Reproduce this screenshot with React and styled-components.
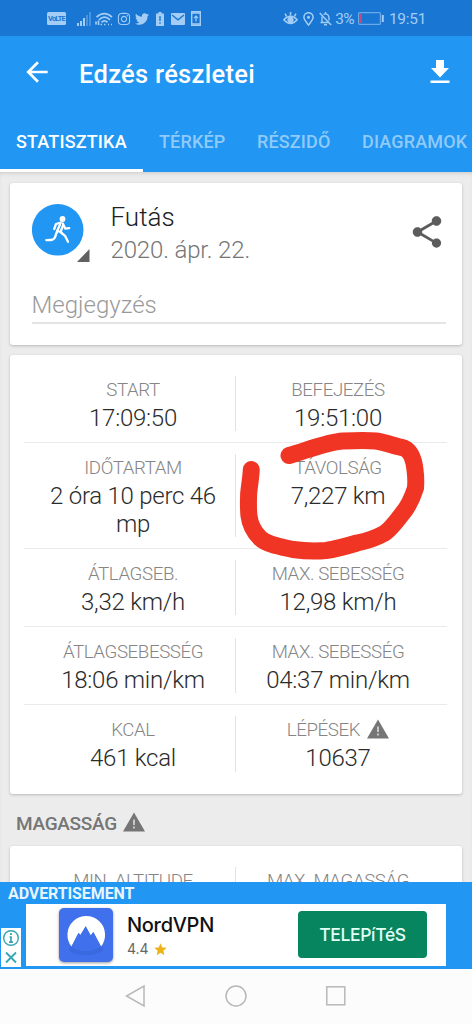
import styled, { createGlobalStyle } from "styled-components";
import { FaInstagram, FaTwitter } from "react-icons/fa";
import { MdArrowBack, MdShare, MdStar } from "react-icons/md";

const GlobalStyle = createGlobalStyle`
  * {
    box-sizing: border-box;
  }
  body {
    margin: 0;
    background: #ececec;
    font-family: Roboto, "Liberation Sans", sans-serif;
  }
  svg {
    display: block;
    flex-shrink: 0;
  }
`;

const Screen = styled.div`
  width: 472px;
  height: 1024px;
  display: flex;
  flex-direction: column;
  overflow: hidden;
  background: #ececec;
`;

const StatusBar = styled.div`
  height: 36px;
  flex-shrink: 0;
  display: flex;
  align-items: center;
  padding: 1px 0 0 47px;
  background: #1976d2;
  color: #a3cdf5;
`;

const StatusItem = styled.div`
  margin-left: ${({ $gap }) => $gap || 0}px;
  display: flex;
  justify-content: center;
  width: ${({ $width }) => $width}px;
  white-space: nowrap;
  font-size: 15.5px;
  line-height: 18px;
  letter-spacing: ${({ $spacing }) => $spacing || 0}px;
`;

const Volte = styled.div`
  width: 19px;
  height: 13px;
  border-radius: 1.5px;
  background: #a3cdf5;
  color: #1976d2;
  font-size: 7.5px;
  font-weight: 700;
  line-height: 13px;
  text-align: center;
  letter-spacing: -0.8px;
`;

const Header = styled.header`
  height: 136px;
  flex-shrink: 0;
  display: flex;
  flex-direction: column;
  background: #2196f3;
`;

const TitleRow = styled.div`
  height: 71px;
  display: flex;
  align-items: center;
  padding: 0 22px 0 21px;
  color: #fff;
`;

const Title = styled.h1`
  flex: 1;
  margin: 4px 0 0 26px;
  font-size: 25.5px;
  font-weight: 500;
  line-height: 32px;
  letter-spacing: 0.3px;
`;

const Tabs = styled.nav`
  height: 65px;
  display: flex;
  overflow: hidden;
`;

const Tab = styled.div`
  height: 65px;
  flex-shrink: 0;
  padding: 23px 0 0 16px;
  width: ${({ $width }) => $width}px;
  white-space: nowrap;
  font-size: 18px;
  font-weight: 500;
  line-height: 24px;
  letter-spacing: 0.15px;
  color: ${({ $active }) => ($active ? "#fff" : "#90caf9")};
  border-bottom: 3px solid ${({ $active }) => ($active ? "#fff" : "transparent")};
`;

const Content = styled.main`
  height: 709.5px;
  flex-shrink: 0;
  display: flex;
  flex-direction: column;
  padding: 11px 10px 0;
  overflow: hidden;
  box-shadow: inset 0 3px 4px -2px rgba(0, 0, 0, 0.15);
`;

const Card = styled.section`
  flex-shrink: 0;
  height: ${({ $height }) => $height}px;
  margin-bottom: ${({ $gap }) => $gap || 0}px;
  border-radius: 3px;
  background: #fff;
  box-shadow: 0 1px 3px rgba(0, 0, 0, 0.22);
`;

const Summary = styled.div`
  display: flex;
  height: 99px;
  padding: 21px 16px 0 22px;
`;

const Sport = styled.div`
  width: 58px;
  height: 58px;
`;

const SummaryText = styled.div`
  flex: 1;
  margin: -4px 0 0 20.5px;
`;

const SportName = styled.div`
  font-size: 26px;
  font-weight: 300;
  line-height: 34px;
  color: #212121;
`;

const SportDate = styled.div`
  font-size: 24px;
  font-weight: 300;
  line-height: 32px;
  color: #757575;
  letter-spacing: -0.15px;
`;

const Share = styled.div`
  margin-top: 9px;
  width: 38px;
  height: 38px;
`;

const NoteField = styled.div`
  height: 42px;
  margin: 0 16px 0 21.5px;
  padding-top: 7px;
  border-bottom: 2px solid #e4e4e4;
  font-size: 24px;
  font-weight: 300;
  line-height: 32px;
  color: #9a9a9a;
`;

const StatsCard = styled(Card)`
  padding: 10px 15px 0 14px;
`;

const StatRow = styled.div`
  display: grid;
  grid-template-columns: 211px 211px;
  min-height: 78px;
  padding: 11px 0;
  border-bottom: ${({ $last }) => ($last ? "none" : "1.5px solid #ebebeb")};
`;

const Stat = styled.div`
  padding: ${({ $right }) => ($right ? "1px 6px 0 0" : "1px 0 0 6px")};
  border-left: 1px solid ${({ $right }) => ($right ? "#e2e2e2" : "transparent")};
  text-align: center;
`;

const Label = styled.div`
  display: flex;
  align-items: center;
  justify-content: center;
  gap: 7px;
  height: 25px;
  padding-top: 2px;
  font-size: 18.7px;
  font-weight: 300;
  line-height: 25px;
  color: #858585;
  letter-spacing: -0.4px;

  svg {
    margin-top: -4px;
  }
`;

const Value = styled.div`
  padding: 2px 12px 0;
  margin-bottom: -1px;
  font-size: 24px;
  font-weight: 300;
  line-height: 28px;
  color: #2b2b2b;
  letter-spacing: -0.25px;
`;

const SectionTitle = styled.h2`
  flex-shrink: 0;
  display: flex;
  align-items: center;
  gap: 6px;
  height: 52px;
  margin: 0;
  padding: 7px 0 0 6px;
  font-size: 19px;
  font-weight: 500;
  color: #757575;
  letter-spacing: -0.3px;

  svg {
    margin-top: -3px;
  }
`;

const Ad = styled.aside`
  height: 87px;
  flex-shrink: 0;
  background: #2196f3;
`;

const AdTitle = styled.div`
  height: 22.5px;
  padding-left: 8px;
  font-size: 16px;
  font-weight: 700;
  line-height: 23px;
  color: #e8f5ff;
  letter-spacing: -0.1px;
`;

const AdRow = styled.div`
  display: flex;
  height: 63px;
`;

const AdChoices = styled.div`
  align-self: flex-end;
  margin: 0 5px 0 1px;
  width: 20px;
  height: 39px;
  background: #fff;
`;

const AdBox = styled.div`
  width: 420px;
  height: 62px;
  display: flex;
  padding-left: 33px;
  background: #fff;
`;

const AppIcon = styled.div`
  width: 54px;
  height: 54px;
  margin-top: 4px;
  border-radius: 5px;
  overflow: hidden;
  background: #4170ed;
  box-shadow: 0 1px 3px rgba(0, 0, 0, 0.4);
`;

const AppText = styled.div`
  width: 171px;
  margin: 8px 0 0 14px;
  font-family: Inter, sans-serif;
`;

const AppName = styled.div`
  font-size: 20px;
  font-weight: 500;
  line-height: 26px;
  color: #111;
  letter-spacing: -0.3px;
`;

const Rating = styled.div`
  display: flex;
  align-items: center;
  gap: 4px;
  font-size: 14px;
  line-height: 22px;
  color: #666;
`;

const Install = styled.button`
  width: 129px;
  height: 47px;
  margin: 7px 0 0;
  padding: 0;
  border: 0;
  border-radius: 4px;
  background: #06855f;
  color: #e4fff5;
  font-family: Inter, sans-serif;
  font-size: 17.5px;
  font-weight: 500;
  letter-spacing: -0.35px;
`;

const NavBar = styled.footer`
  flex: 1;
  display: flex;
  align-items: center;
  justify-content: center;
  gap: 76px;
  background: #fcfcfc;
`;

const Marker = styled.svg`
  position: absolute;
  left: 236px;
  top: 425px;
  pointer-events: none;
`;

const STATS = [
  [
    { label: "START", value: "17:09:50" },
    { label: "BEFEJEZÉS", value: "19:51:00" },
  ],
  [
    { label: "IDŐTARTAM", value: "2 óra 10 perc 46 mp" },
    { label: "TÁVOLSÁG", value: "7,227 km" },
  ],
  [
    { label: "ÁTLAGSEB.", value: "3,32 km/h" },
    { label: "MAX. SEBESSÉG", value: "12,98 km/h" },
  ],
  [
    { label: "ÁTLAGSEBESSÉG", value: "18:06 min/km" },
    { label: "MAX. SEBESSÉG", value: "04:37 min/km" },
  ],
  [
    { label: "KCAL", value: "461 kcal" },
    { label: "LÉPÉSEK", value: "10637", warning: true },
  ],
];

const SignalIcon = () => (
  <svg width="14" height="14" viewBox="0 0 14 14" fill="currentColor">
    <rect x="0" y="11" width="2" height="3" />
    <rect x="3" y="9" width="2" height="5" />
    <rect x="6" y="6" width="2" height="8" />
    <rect x="9" y="3" width="2" height="11" opacity="0.35" />
    <rect x="12" y="0" width="2" height="14" opacity="0.35" />
  </svg>
);

const WifiIcon = () => (
  <svg width="18" height="14" viewBox="0 0 18 14" fill="none" stroke="currentColor" strokeWidth="1.7">
    <path d="M1.5 5.2Q9.5-1.8 17 5.2" />
    <path d="M4 7.8Q9.5 2.6 15 7.8" />
    <path d="M6.5 10.3Q9.5 7.3 12.5 10.3" />
    <path d="M1 12.5V9.5M3.5 13V8.5M5.5 12.5H7M13 12.5h1M16 12.5h1M9 12.5h1.5" />
  </svg>
);

const BatteryAlertIcon = () => (
  <svg width="8" height="14" viewBox="0 0 8 14">
    <path d="M2.5 0h3v1.5H8V14H0V1.5h2.5z" fill="currentColor" />
    <path d="M4 4v5M4 10.2v1.6" stroke="#1976d2" strokeWidth="1.4" />
  </svg>
);

const MailIcon = () => (
  <svg width="14" height="12" viewBox="0 0 14 12">
    <rect width="14" height="12" rx="1" fill="currentColor" />
    <path d="M1 2l6 4.8L13 2" fill="none" stroke="#1976d2" strokeWidth="1.3" />
  </svg>
);

const PhoneUpIcon = () => (
  <svg width="10" height="15" viewBox="0 0 10 15" fill="none" stroke="currentColor">
    <rect x="0.7" y="0.7" width="8.6" height="13.6" strokeWidth="1.4" />
    <path d="M1 2h8M1 13h8" strokeWidth="1.5" />
    <path d="M5 10.5V5.5M3 7.2l2-2 2 2" strokeWidth="1.2" />
  </svg>
);

const EyeIcon = () => (
  <svg width="15" height="13" viewBox="0 0 15 13" fill="none" stroke="currentColor" strokeWidth="1.5">
    <path d="M.8 7.8Q7.5.8 14.2 7.8Q7.5 15.2.8 7.8z" />
    <circle cx="7.5" cy="8" r="2.4" fill="currentColor" />
    <path d="M7.5 3.5V0M3.7 4.5L2 1.7M11.3 4.5L13 1.7" />
  </svg>
);

const PinIcon = () => (
  <svg width="11" height="14" viewBox="0 0 11 14">
    <path d="M5.5 13C3 9.8.9 7.7.9 5.3a4.6 4.6 0 0 1 9.2 0c0 2.4-2.1 4.5-4.6 7.7z" fill="none" stroke="currentColor" strokeWidth="1.5" />
    <circle cx="5.5" cy="5.3" r="1.5" fill="currentColor" />
  </svg>
);

const BellOffIcon = () => (
  <svg width="13" height="14" viewBox="0 0 13 14" fill="none" stroke="currentColor" strokeWidth="1.4">
    <path d="M3 4.5V10.5H1.5M3 10.5H10M4.5 2.5Q6.5 1.2 8.5 2.5Q10 3.6 10 6v2.5M5 12.8h3M6.5 0v2" />
    <path d="M.7 1l11.5 12" />
  </svg>
);

const BatteryIcon = () => (
  <svg width="26" height="13" viewBox="0 0 26 13">
    <rect x="0.6" y="0.6" width="21.8" height="11.8" rx="1" fill="none" stroke="#6aa9ea" strokeWidth="1.2" />
    <rect x="1.5" y="2" width="2.5" height="9" fill="#c04a78" />
    <rect x="23.8" y="3" width="2" height="7" fill="#a3cdf5" />
  </svg>
);

const DownloadIcon = () => (
  <svg width="20" height="24" viewBox="0 0 20 24" fill="#fff">
    <path d="M6 0h8v8h5l-9 9.5L1 8h5z" />
    <rect x="0.5" y="20.5" width="19" height="2.5" />
  </svg>
);

const WarningIcon = () => (
  <svg width="22" height="20" viewBox="0 0 22 20">
    <path d="M11 0.5L22 19.5H0z" fill="#757575" />
    <path d="M11 7.5v5.5M11 14.5v2" stroke="#e2e2e2" strokeWidth="1.5" />
  </svg>
);

const RunnerIcon = () => (
  <svg width="58" height="58" viewBox="0 0 58 58">
    <circle cx="25.7" cy="25.8" r="25.8" fill="#2196f3" />
    <g fill="none" stroke="#fff" strokeWidth="2.3" strokeLinejoin="round" strokeLinecap="round">
      <path d="M28.8 18.6L24 20L22.2 25" />
      <path d="M30.8 19.5L33.2 24.6L37.2 24.2" />
      <path d="M28 20.5L25.2 27L23.3 32.5Q22.3 35.8 19 36L14.300 36.200" />
      <path d="M31 21.500L28.500 28L33 31.800L36 37.700" />
      <path d="M25.200 27L28.500 28" />
    </g>
    <circle cx="30.5" cy="15" r="2.9" fill="#fff" />
    <path d="M57.5 45v13H45z" fill="#616161" />
  </svg>
);

const NordLogo = () => (
  <svg width="54" height="54" viewBox="0 0 54 54">
    <ellipse cx="27" cy="41" rx="17" ry="6" fill="#3a68df" />
    <path
      d="M12.5 38.5A18.8 18.8 0 1 1 42 38.5L34.3 24L31.7 27.5L26.7 18.3L21.5 27L19.5 25z"
      fill="#fff"
    />
    <path d="M12.5 38.5L19.5 25L21.5 27L26.7 18.3L31.7 27.5L34.3 24L42 38.5Q27 48 12.5 38.5z" fill="#4170ed" />
  </svg>
);

const AdChoicesIcon = () => (
  <svg width="20" height="39" viewBox="0 0 20 39" fill="none" stroke="#35a5b5">
    <circle cx="10" cy="10" r="7.3" strokeWidth="1.4" />
    <path d="M10 5v2M8.5 9H10v5M8 14.2h4" strokeWidth="1.7" />
    <path d="M5 24.5l10 10M15 24.5l-10 10" strokeWidth="1.8" />
  </svg>
);

const App = () => {
  return (
    <Screen>
      <GlobalStyle />
      <StatusBar>
        <Volte>VoLTE</Volte>
        <StatusItem $gap={11} $width={14}><SignalIcon /></StatusItem>
        <StatusItem $gap={4} $width={18}><WifiIcon /></StatusItem>
        <StatusItem $gap={4.5} $width={13}><FaInstagram size={14} /></StatusItem>
        <StatusItem $gap={5} $width={13}><FaTwitter size={14} /></StatusItem>
        <StatusItem $gap={7.5} $width={8}><BatteryAlertIcon /></StatusItem>
        <StatusItem $gap={7} $width={14}><MailIcon /></StatusItem>
        <StatusItem $gap={6} $width={10}><PhoneUpIcon /></StatusItem>
        <StatusItem $gap={82} $width={15}><EyeIcon /></StatusItem>
        <StatusItem $gap={5} $width={11}><PinIcon /></StatusItem>
        <StatusItem $gap={5} $width={13}><BellOffIcon /></StatusItem>
        <StatusItem $gap={3} $width={19} $spacing={-0.8}>3%</StatusItem>
        <StatusItem $gap={4} $width={26}><BatteryIcon /></StatusItem>
        <StatusItem $gap={5} $width={37} $spacing={-0.3}>19:51</StatusItem>
      </StatusBar>
      <Header>
        <TitleRow>
          <MdArrowBack size={32} />
          <Title>Edzés részletei</Title>
          <DownloadIcon />
        </TitleRow>
        <Tabs>
          <Tab $active $width={143}>STATISZTIKA</Tab>
          <Tab $width={98}>TÉRKÉP</Tab>
          <Tab $width={105}>RÉSZIDŐ</Tab>
          <Tab $width={126}>DIAGRAMOK</Tab>
        </Tabs>
      </Header>
      <Content>
        <Card $height={161.5} $gap={10.5}>
          <Summary>
            <Sport>
              <RunnerIcon />
            </Sport>
            <SummaryText>
              <SportName>Futás</SportName>
              <SportDate>2020. ápr. 22.</SportDate>
            </SummaryText>
            <Share>
              <MdShare size={38} color="#5c5c5c" />
            </Share>
          </Summary>
          <NoteField>Megjegyzés</NoteField>
        </Card>
        <StatsCard $height={439}>
          {STATS.map((row, i) => (
            <StatRow key={i} $last={i === STATS.length - 1}>
              {row.map((stat, j) => (
                <Stat key={j} $right={j === 1}>
                  <Label>
                    {stat.label}
                    {stat.warning && <WarningIcon />}
                  </Label>
                  <Value>{stat.value}</Value>
                </Stat>
              ))}
            </StatRow>
          ))}
        </StatsCard>
        <SectionTitle>
          MAGASSÁG
          <WarningIcon />
        </SectionTitle>
        <StatsCard $height={120}>
          <StatRow $last>
            <Stat>
              <Label>MIN. ALTITUDE</Label>
            </Stat>
            <Stat $right>
              <Label>MAX. MAGASSÁG</Label>
            </Stat>
          </StatRow>
        </StatsCard>
      </Content>
      <Ad>
        <AdTitle>ADVERTISEMENT</AdTitle>
        <AdRow>
          <AdChoices>
            <AdChoicesIcon />
          </AdChoices>
          <AdBox>
            <AppIcon>
              <NordLogo />
            </AppIcon>
            <AppText>
              <AppName>NordVPN</AppName>
              <Rating>
                4.4 <MdStar size={15} color="#eeb211" />
              </Rating>
            </AppText>
            <Install>TELEPíTéS</Install>
          </AdBox>
        </AdRow>
      </Ad>
      <NavBar>
        <svg width="24" height="24" viewBox="0 0 24 24" fill="none" stroke="#b8b8b8" strokeWidth="1.5">
          <path d="M20 2v20L2.5 12z" />
        </svg>
        <svg width="24" height="24" viewBox="0 0 24 24" fill="none" stroke="#b8b8b8" strokeWidth="1.5">
          <circle cx="12" cy="12" r="10" />
        </svg>
        <svg width="24" height="24" viewBox="0 0 24 24" fill="none" stroke="#b8b8b8" strokeWidth="1.5">
          <rect x="2.8" y="2.8" width="18" height="18" />
        </svg>
      </NavBar>
      <Marker width="192" height="140" viewBox="236 425 192 140">
        <path
          d="M289 455.500C308 450 327 442 343 441C354 440.500 366 440 376 441C386 442.500 394 446 404 448C411 451 414 460 415 470C416 477 416 482 415.500 488C412 499 408 507 402 514C396 522 390 530 384 533.500C376 538 367 541 357 543C347 546 337 549 326 550.500C315 551.500 304 551 293 549.500C282 547 267 545 260 538C253 531 250 524 249 516C248 507 248.500 499 248.700 493C249.500 485 251 477 251.300 469.500"
          fill="none"
          stroke="#f03524"
          strokeWidth="17"
          strokeLinecap="round"
          strokeLinejoin="round"
        />
      </Marker>
    </Screen>
  );
};

export default App;
